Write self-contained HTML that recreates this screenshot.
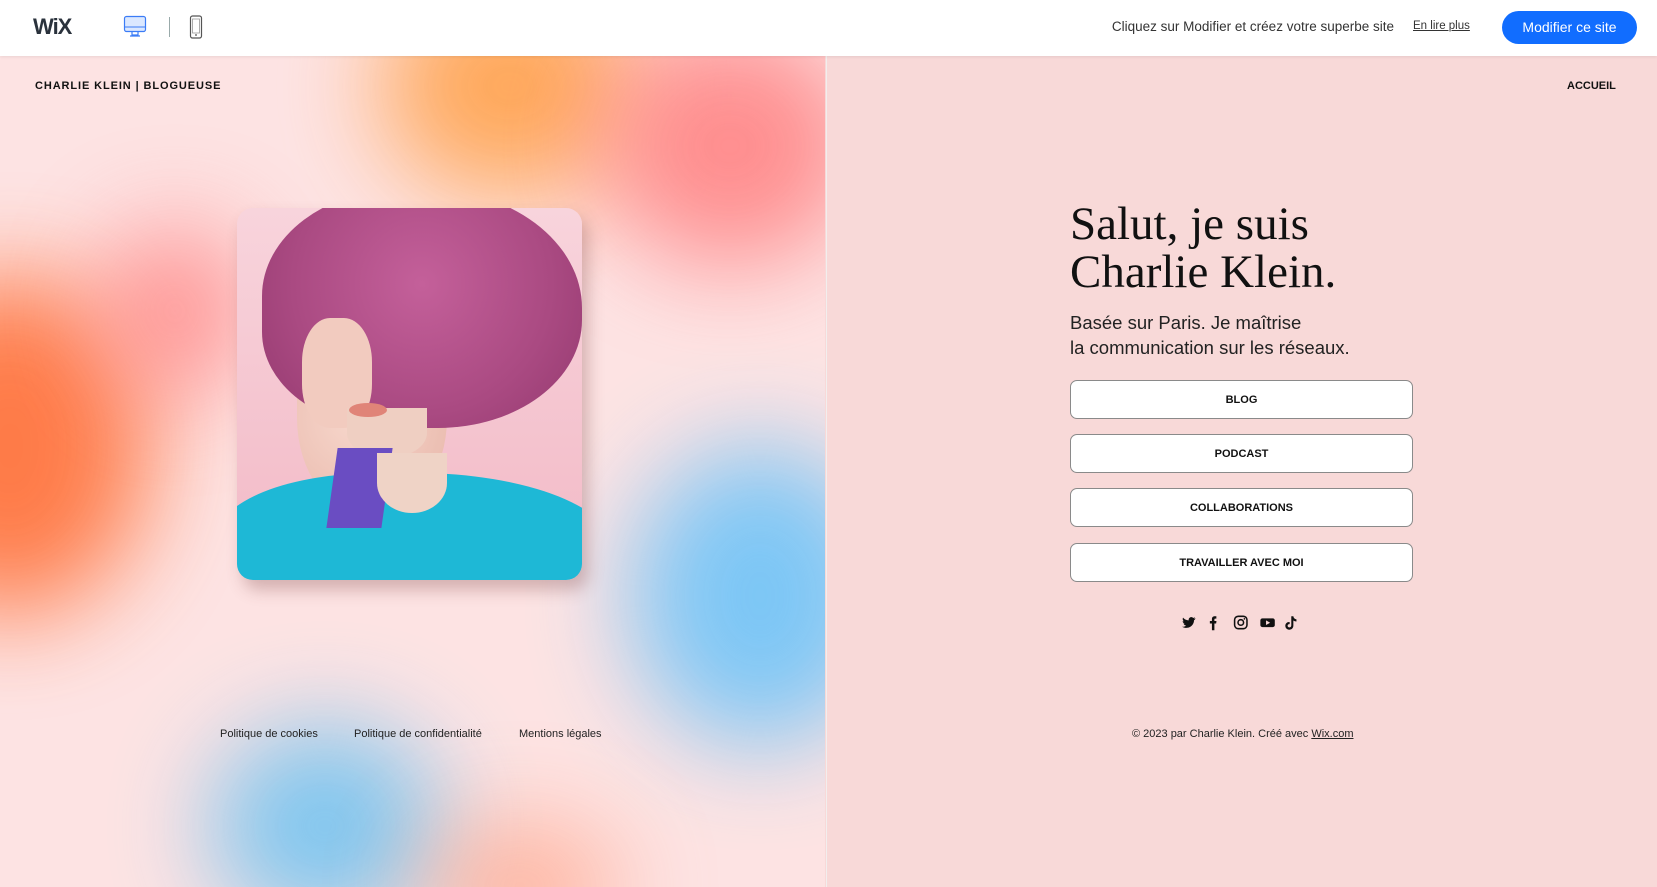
<!DOCTYPE html>
<html><head><meta charset="utf-8"><style>
*{margin:0;padding:0;box-sizing:border-box}
html,body{width:1657px;height:887px;overflow:hidden}
body{font-family:"Liberation Sans",sans-serif;position:relative;background:#f8d9d8}
#top{position:absolute;left:0;top:0;width:1657px;height:56px;background:#fff;z-index:5;box-shadow:0 1px 3px rgba(0,0,0,.08)}
#left{position:absolute;left:0;top:56px;width:825px;height:831px;overflow:hidden;background:#fde3e3}
.blob{position:absolute;border-radius:50%;filter:blur(50px)}
#right{position:absolute;left:826px;top:56px;width:831px;height:831px;background:#f8d9d8;border-left:1px solid #f2eeee;overflow:hidden}
.btn{position:absolute;left:243px;width:343px;height:39px;background:#fff;border:1px solid #8a8a8a;border-radius:7px;font-size:11px;font-weight:bold;color:#111;display:flex;align-items:center;justify-content:center}
</style></head><body>
<div id="top">
 <div style="position:absolute;left:33px;top:14px;font-size:22px;font-weight:bold;color:#2a323c;letter-spacing:-1px">WiX</div>
 <svg style="position:absolute;left:123px;top:15px" width="24" height="24" viewBox="0 0 24 24"><rect x="1.5" y="1.5" width="21" height="15" rx="2" fill="#dbe8ff" stroke="#3b7cf6" stroke-width="1.2"/><line x1="1.5" y1="12" x2="22.5" y2="12" stroke="#3b7cf6"/><path d="M9 17v3h6v-3M7 21h10" stroke="#3b7cf6" fill="none" stroke-width="1.2"/></svg>
 <div style="position:absolute;left:169px;top:17px;width:1px;height:20px;background:#9aa"></div>
 <svg style="position:absolute;left:189px;top:15px" width="14" height="24" viewBox="0 0 14 24"><rect x="1.5" y="1" width="11" height="22" rx="2" fill="none" stroke="#555" stroke-width="1.2"/><rect x="3.5" y="4" width="7" height="14" fill="none" stroke="#999" stroke-width=".8"/><circle cx="7" cy="20" r="1" fill="#777"/></svg>
 <div style="position:absolute;right:263px;top:19px;font-size:13.5px;color:#333">Cliquez sur Modifier et créez votre superbe site</div>
 <div style="position:absolute;left:1413px;top:20px;font-size:11.5px;color:#333;text-decoration:underline">En lire plus</div>
 <div style="position:absolute;left:1502px;top:11px;width:135px;height:33px;border-radius:17px;background:#116dff;color:#fff;font-size:14px;text-align:center;line-height:33px">Modifier ce site</div>
</div>
<div id="left">
 <div class="blob" style="left:380px;top:-80px;width:260px;height:220px;background:#ffa24c;opacity:.9"></div>
 <div class="blob" style="left:600px;top:-30px;width:260px;height:240px;background:#ff7f80;opacity:.85"></div>
 <div class="blob" style="left:-130px;top:220px;width:280px;height:340px;background:#ff6a2e;opacity:.85"></div>
 <div class="blob" style="left:100px;top:170px;width:150px;height:170px;background:#ff8080;opacity:.8"></div>
 <div class="blob" style="left:630px;top:390px;width:260px;height:300px;background:#70c4f8;opacity:.9"></div>
 <div class="blob" style="left:210px;top:670px;width:230px;height:200px;background:#72c3f0;opacity:.9"></div>
 <div class="blob" style="left:420px;top:770px;width:200px;height:120px;background:#ff9a7a;opacity:.7"></div>
 <div style="position:absolute;left:35px;top:24px;font-size:11px;font-weight:bold;letter-spacing:.9px;color:#111">CHARLIE KLEIN | BLOGUEUSE</div>
 <div style="position:absolute;left:237px;top:152px;width:345px;height:372px;border-radius:16px;overflow:hidden;background:linear-gradient(#f8d4dc,#f2b9c6);box-shadow:6px 10px 16px rgba(120,60,60,.3)">
  <div style="position:absolute;left:60px;top:110px;width:150px;height:200px;border-radius:40% 40% 50% 50%;background:radial-gradient(circle at 40% 50%,#f7d7cc,#e6b3a6)"></div>
  <div style="position:absolute;left:25px;top:-20px;width:320px;height:240px;border-radius:45% 50% 45% 40%;background:radial-gradient(circle at 50% 40%,#c4609a,#aa4a82 60%,#93386e)"></div>
  <div style="position:absolute;left:65px;top:110px;width:70px;height:110px;border-radius:40%;background:#f2cbbf"></div>
  <div style="position:absolute;left:110px;top:200px;width:80px;height:50px;border-radius:0 0 50% 50%;background:#efcfc2"></div>
  <div style="position:absolute;left:112px;top:195px;width:38px;height:14px;border-radius:50%;background:#e08478"></div>
  <div style="position:absolute;left:-20px;top:265px;width:400px;height:160px;border-radius:40% 50% 0 0;background:#1eb8d6"></div>
  <div style="position:absolute;left:95px;top:240px;width:55px;height:80px;background:#6a4dc2;transform:skewX(-8deg)"></div>
  <div style="position:absolute;left:140px;top:245px;width:70px;height:60px;background:#efd3c6;border-radius:0 0 50% 50%"></div>
 </div>
 <div style="position:absolute;left:220px;top:672px;font-size:11px;color:#222">Politique de cookies</div>
 <div style="position:absolute;left:354px;top:672px;font-size:11px;color:#222">Politique de confidentialité</div>
 <div style="position:absolute;left:519px;top:672px;font-size:11px;color:#222">Mentions légales</div>
</div>
<div id="right">
 <div style="position:absolute;left:740px;top:24px;font-size:11px;font-weight:bold;color:#111">ACCUEIL</div>
 <div style="position:absolute;left:243px;top:144px;font-family:'Liberation Serif',serif;font-size:47px;line-height:48px;color:#111">Salut, je suis<br>Charlie Klein.</div>
 <div style="position:absolute;left:243px;top:254px;font-size:18.5px;line-height:25px;color:#222">Basée sur Paris. Je maîtrise<br>la communication sur les réseaux.</div>
 <div class="btn" style="top:324px">BLOG</div>
 <div class="btn" style="top:378px">PODCAST</div>
 <div class="btn" style="top:432px">COLLABORATIONS</div>
 <div class="btn" style="top:487px">TRAVAILLER AVEC MOI</div>
 <svg style="position:absolute;left:354px;top:558px" width="134" height="18" viewBox="0 0 130 16" fill="#111">
  <path d="M14 3.5c-.5.2-1 .4-1.6.4.6-.4 1-.9 1.2-1.5-.5.3-1.1.5-1.7.7-1-1.1-2.8-1.1-3.8 0-.6.6-.8 1.5-.6 2.4C5.300 5.400 3.300 4.400 2 2.800c-.7 1.200-.3 2.800.8 3.500-.4 0-.8-.1-1.200-.3 0 1.300.9 2.400 2.100 2.600-.4.1-.8.1-1.200 0 .3 1.100 1.400 1.900 2.500 1.900C4 11.300 2.400 11.700 1 11.600 5 14 10 12.500 11.900 8.500c.5-1 .7-2 .7-3.100.6-.4 1-.9 1.400-1.500z"/>
  <path d="M30 15V8.500h-2V6h2V4.300C30 2.500 31 1.500 32.700 1.500h1.600v2.300h-1.100c-.6 0-.8.300-.8.800V6h2l-.3 2.500h-1.700V15z"/>
  <rect x="52" y="1.500" width="12" height="12" rx="3.500" fill="none" stroke="#111" stroke-width="1.500"/><circle cx="58" cy="7.500" r="2.700" fill="none" stroke="#111" stroke-width="1.500"/><circle cx="61.500" cy="4" r=".8"/>
  <path d="M79 3.500h10c1.200 0 2 .8 2 2v4.500c0 1.200-.8 2-2 2H79c-1.200 0-2-.8-2-2V5.500c0-1.200.8-2 2-2z"/><path d="M82.500 5.500v4.500L86.500 7.700z" fill="#f8d9d8"/>
  <path d="M107 1.500h2c.2 1.700 1.300 2.800 3 3v2c-1.100 0-2.100-.3-3-.9v4.900c0 2.300-1.800 4-4 4s-3.800-1.700-3.800-3.800 1.900-3.900 4.200-3.600v2.100c-1-.3-2 .4-2 1.500 0 .9.700 1.600 1.600 1.600s2-.7 2-1.900z"/>
 </svg>
 <div style="position:absolute;left:305px;top:672px;font-size:11px;color:#222">© 2023 par Charlie Klein. Créé avec <u>Wix.com</u></div>
</div>
</body></html>
